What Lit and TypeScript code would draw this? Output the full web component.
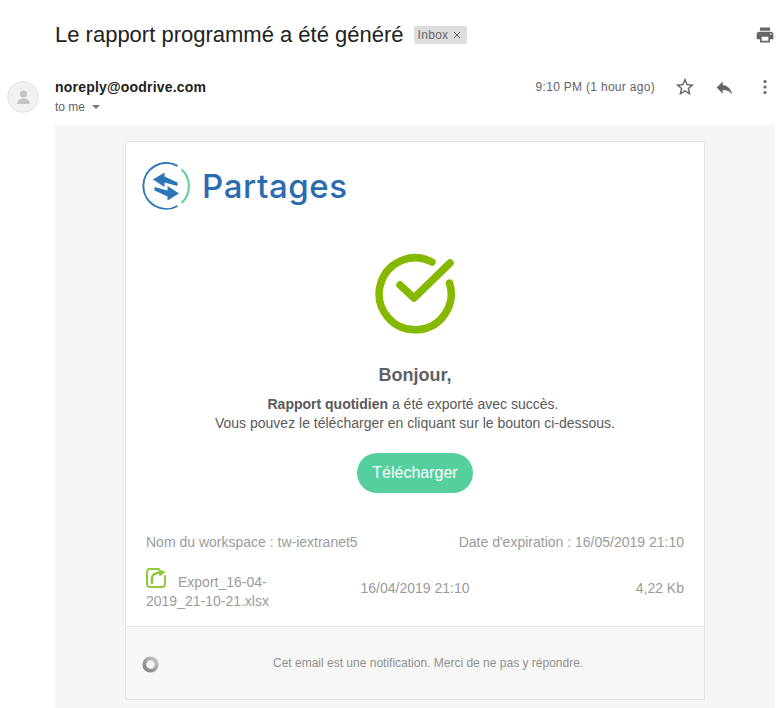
import { LitElement, html, css } from "lit";
import { customElement } from "lit/decorators.js";

@customElement("app-root")
export class AppRoot extends LitElement {
  static styles = css`
    :host { display: block; width: 784px; height: 708px; overflow: hidden; background: #fff; font-family: "Liberation Sans", Arial, sans-serif; color: #222; }
    .subject { display: flex; align-items: center; height: 24px; padding: 23px 9px 0 55px; }
    h1 { margin: 0; font-size: 22px; font-weight: 400; line-height: 24px; color: #222; }
    .chip { margin-left: 10px; height: 18px; line-height: 18px; padding: 0 6px 0 4px; background: #ddd; border-radius: 2px; font-size: 12px; letter-spacing: 0.3px; color: #666; display: flex; align-items: center; gap: 5px; }
    .chip svg { display: block; }
    .print { margin-left: auto; margin-right: 0; display: block; }
    .head { display: flex; padding: 30px 9px 0 7px; height: 48px; }
    .avatar { width: 32px; height: 32px; border-radius: 50%; background: #f1f1f1; border: 1px solid #e6e6e6; box-sizing: border-box; flex: none; margin-top: 4px; overflow: hidden; }
    .avatar svg { display: block; }
    .who { margin-left: 16px; flex: 1; }
    .from { font-size: 14px; font-weight: 700; line-height: 20px; color: #222; letter-spacing: 0.2px; }
    .to { font-size: 12px; line-height: 20px; color: #5f6368; display: flex; align-items: center; gap: 7px; }
    .to svg { display: block; }
    .time { font-size: 12px; color: #5f6368; line-height: 20px; letter-spacing: 0.3px; }
    .acts { display: flex; align-items: center; height: 20px; }
    .acts svg { display: block; }
    .star { margin-left: 19px; }
    .reply { margin-left: 18px; }
    .more { margin-left: 20px; }
    .mail { margin: 0 9px 0 55px; background: #f5f5f5; height: 583px; padding: 16px 70px 0; box-sizing: border-box; }
    .card { width: 580px; height: 559px; box-sizing: border-box; background: #fff; border: 1px solid #e5e5e5; display: flex; flex-direction: column; font-size: 14px; color: #9b9b9b; }
    .logo { display: flex; align-items: center; height: 48px; margin: 20px 0 0 16px; gap: 12px; }
    .logo svg { display: block; flex: none; }
    .logo span { font-family: "Inter", "Open Sans", sans-serif; font-weight: 500; font-size: 33px; line-height: 48px; color: #2b6cb0; letter-spacing: 0.6px; }
    .check { display: flex; justify-content: center; margin-top: 40px; height: 84px; }
    .hello { margin-top: 29px; text-align: center; font-size: 18px; font-weight: 700; line-height: 24px; color: #5f5f66; }
    .msg { margin-top: 8px; text-align: center; font-size: 14px; line-height: 19px; color: #5a5a5a; }
    .l1 { padding-right: 4px; }
    .btn { align-self: center; margin-top: 20px; width: 116px; height: 40px; line-height: 39px; border-radius: 20px; background: #56cf9e; color: #fff; font-size: 16px; text-align: center; }
    .meta { display: flex; justify-content: space-between; margin-top: 39px; padding: 0 20px; line-height: 20px; }
    .file { display: grid; grid-template-columns: 1fr 1fr 1fr; align-items: center; padding: 0 20px; margin-top: 14px; height: 46px; line-height: 19px; }
    .fname { width: 140px; }
    .fname svg { vertical-align: -1px; margin-right: 12px; }
    .fdate { text-align: center; white-space: nowrap; margin-bottom: 2px; }
    .fsize { text-align: right; margin-bottom: 2px; }
    .foot { margin-top: auto; height: 73px; box-sizing: border-box; background: #f7f7f7; border-top: 1px solid #e5e5e5; display: flex; align-items: center; padding-left: 16px; font-size: 12px; color: #8f8f8f; }
    .foot svg { display: block; flex: none; margin-top: 2px; }
    .foot span { margin-left: 114px; }
  `;

  render() {
    return html`
      <div class="subject">
        <h1>Le rapport programmé a été généré</h1>
        <div class="chip">Inbox
          <svg width="8" height="8" viewBox="0 0 8 8"><path d="M1 1l6 6M7 1L1 7" stroke="#666" stroke-width="1" fill="none"/></svg>
        </div>
        <svg class="print" width="20" height="20" viewBox="0 0 24 24" fill="#666"><path d="M19 8H5c-1.66 0-3 1.34-3 3v6h4v4h12v-4h4v-6c0-1.66-1.34-3-3-3zm-3 11H8v-5h8v5zm3-7c-.55 0-1-.45-1-1s.45-1 1-1 1 .45 1 1-.45 1-1 1zm-1-9H6v4h12V3z"/></svg>
      </div>
      <div class="head">
        <div class="avatar">
          <svg width="30" height="30" viewBox="0 0 30 30" fill="#c4c4c4"><circle cx="15.500" cy="12" r="3.600"/><path d="M9.500 22v-2c0-2.400 4-3.600 6-3.600s6 1.200 6 3.600v2z"/></svg>
        </div>
        <div class="who">
          <div class="from">noreply@oodrive.com</div>
          <div class="to">to me <svg width="8" height="4" viewBox="0 0 8 4"><path d="M0 0h8L4 4z" fill="#777"/></svg></div>
        </div>
        <div class="acts">
          <span class="time">9:10 PM (1 hour ago)</span>
          <svg class="star" width="22" height="22" viewBox="0 0 24 24" fill="#666"><path d="M22 9.240l-7.190-.62L12 2 9.190 8.630 2 9.240l5.460 4.730L5.820 21 12 17.270 18.180 21l-1.630-7.030L22 9.240zM12 15.400l-3.760 2.270 1-4.280-3.320-2.880 4.380-.38L12 6.100l1.710 4.040 4.380.38-3.320 2.880 1 4.280L12 15.400z"/></svg>
          <svg class="reply" width="21" height="21" viewBox="0 0 24 24" fill="#666"><path d="M10 9V5l-7 7 7 7v-4.100c5 0 8.500 1.600 11 5.100-1-5-4-10-11-11z"/></svg>
          <svg class="more" width="20" height="16" viewBox="0 0 20 16" fill="#666"><circle cx="10" cy="2.500" r="1.600"/><circle cx="10" cy="8" r="1.600"/><circle cx="10" cy="13.500" r="1.600"/></svg>
        </div>
      </div>
      <div class="mail">
        <div class="card">
          <div class="logo">
            <svg width="48" height="48" viewBox="0 0 48 48" fill="none">
              <path d="M35.500 3.800A23 23 0 1 0 35.500 44" stroke="#2b75b8" stroke-width="1.900"/>
              <path d="M39.700 7.600A23 23 0 0 1 39.700 41" stroke="#5fd19f" stroke-width="2.100"/>
              <path d="M11 17.500L22.500 10.500v4L35.500 20.500v3.500l-13-3.500v4.500z" fill="#2b75b8"/>
              <path d="M37 31.500L25.500 38.500v-4L12.500 28.500V25l13 3.500V24z" fill="#2b75b8"/>
            </svg>
            <span>Partages</span>
          </div>
          <div class="check">
            <svg width="84" height="84" viewBox="0 0 84 84" fill="none" stroke="#86b800" stroke-linecap="round" stroke-linejoin="round" stroke-width="7.500">
              <path d="M59 12A36 36 0 1 0 76.500 33"/>
              <path d="M27 35l14 13 36-35"/>
            </svg>
          </div>
          <div class="hello">Bonjour,</div>
          <div class="msg"><span class="l1"><b>Rapport quotidien</b> a été exporté avec succès.</span><br>Vous pouvez le télécharger en cliquant sur le bouton ci-dessous.</div>
          <div class="btn">Télécharger</div>
          <div class="meta"><span>Nom du workspace : tw-iextranet5</span><span>Date d'expiration : 16/05/2019 21:10</span></div>
          <div class="file">
            <div class="fname"><svg width="20" height="20" viewBox="0 0 20 20" fill="none" stroke="#92c83e" stroke-width="2" stroke-linecap="round"><path d="M13 1H4a3 3 0 0 0-3 3v12a3 3 0 0 0 3 3h12a3 3 0 0 0 3-3V8"/><path d="M6 15V10C6 7 9 5 14 4.500" stroke-width="2.600"/><path d="M13.500 1.800l5.500 2.400-5 3.300z" fill="#92c83e" stroke-width="1"/></svg>Export_16-04-2019_21-10-21.xlsx</div>
            <div class="fdate">16/04/2019 21:10</div>
            <div class="fsize">4,22 Kb</div>
          </div>
          <div class="foot">
            <svg width="17" height="17" viewBox="0 0 17 17" fill="none"><defs><linearGradient id="r" x1="0" y1="1" x2="1" y2="0"><stop offset="0" stop-color="#808080"/><stop offset="1" stop-color="#c8c8c8"/></linearGradient></defs><circle cx="8.500" cy="8.500" r="6.200" stroke="url(#r)" stroke-width="3.800"/></svg>
            <span>Cet email est une notification. Merci de ne pas y répondre.</span>
          </div>
        </div>
      </div>
    `;
  }
}
